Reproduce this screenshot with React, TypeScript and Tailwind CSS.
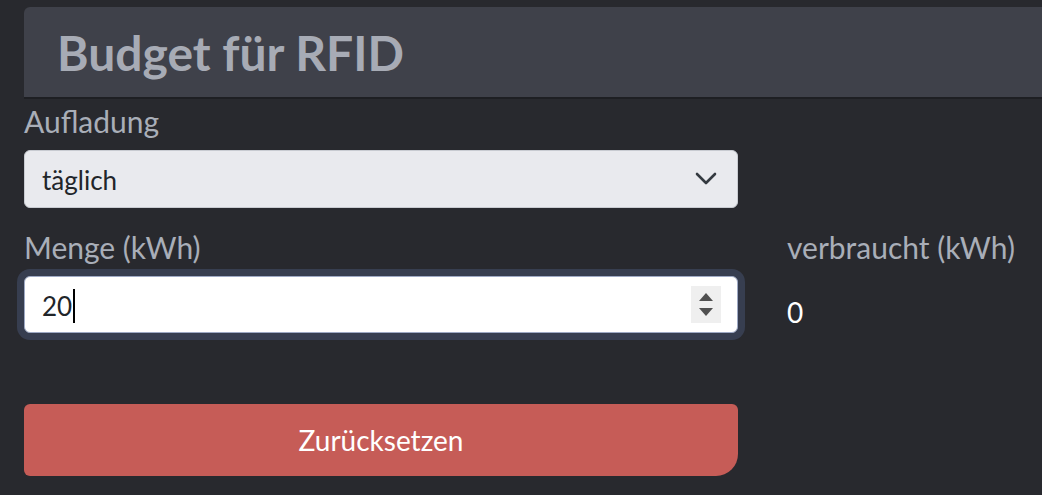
import React from 'react';

const App: React.FC = () => {
  return (
    <div className="min-h-screen bg-[#28292e] pt-[7px] pl-6 font-['Lato',sans-serif] overflow-hidden">
      {/* Kopfzeile */}
      <div className="h-[92px] bg-[#3f414a] rounded-tl-md border-b-2 border-[#1e1f23] flex items-center pl-[33px]">
        <h1 className="text-[48px] leading-none font-bold text-[#a7abb5] pt-[2px]">Budget für RFID</h1>
      </div>

      <div className="w-[714px] pt-[4px]">
        <label className="block text-[30px] leading-[36px] text-[#a9aeb8]">Aufladung</label>
        <div className="mt-[11px] h-[58px] bg-[#e9eaee] border border-[#c8cbd1] rounded-md flex items-center justify-between pl-[17px] pr-[20px]">
          <span className="text-[26px] text-[#212529] pt-[3px]">täglich</span>
          <svg width="22" height="14" viewBox="0 0 22 14" fill="none">
            <path d="M2 2l9 9 9-9" stroke="#343a40" strokeWidth="2.6" strokeLinecap="round" strokeLinejoin="round" />
          </svg>
        </div>
      </div>

      <div className="flex mt-[21px]">
        <div className="w-[714px]">
          <label className="block text-[30px] leading-[36px] text-[#a9aeb8]">Menge (kWh)</label>
          <div className="mt-[11px] h-[57px] bg-white border border-[#9ea9c4] rounded-md ring-[7px] ring-[#373e50] flex items-center justify-between pl-[17px] pr-[16px]">
            <span className="text-[26px] text-[#212529] flex items-center pt-[3px]">
              20<span className="inline-block w-[1.5px] h-[34px] bg-black ml-[1px]" />
            </span>
            <div className="w-[30px] h-[37px] bg-[#efefef] flex flex-col items-center justify-center gap-[7px]">
              <svg width="14" height="8" viewBox="0 0 14 8"><path d="M7 0l7 8H0z" fill="#505050" /></svg>
              <svg width="14" height="8" viewBox="0 0 14 8"><path d="M0 0h14L7 8z" fill="#505050" /></svg>
            </div>
          </div>
        </div>
        <div className="ml-[49px]">
          <label className="block text-[30px] leading-[36px] text-[#a9aeb8] whitespace-nowrap">verbraucht (kWh)</label>
          <div className="mt-[33px] text-[28px] leading-none text-white">0</div>
        </div>
      </div>

      <div className="w-[714px] mt-[71px]">
        <button className="w-full h-[72px] bg-[#c65c57] rounded-md rounded-br-[22px] text-white text-[28px] flex items-center justify-center">
          Zurücksetzen
        </button>
      </div>
    </div>
  );
};

export default App;
